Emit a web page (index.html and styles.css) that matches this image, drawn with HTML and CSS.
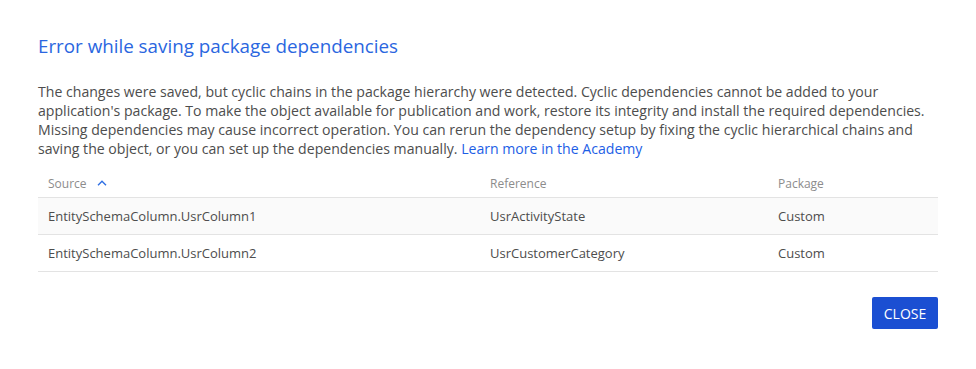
FILE: index.html
```html
<!DOCTYPE html>
<html lang="en">
<head>
    <meta charset="UTF-8">
    <meta name="viewport" content="width=device-width, initial-scale=1.0">
    <title>Error while saving package dependencies</title>
    <link rel="stylesheet" href="styles.css">
</head>
<body>
    <div class="dialog">
        <div class="dialog-title">Error while saving package dependencies</div>

        <div class="dialog-text">
            The changes were saved, but cyclic chains in the package hierarchy were detected. Cyclic dependencies cannot be added to your
            application's package. To make the object available for publication and work, restore its integrity and install the required dependencies.
            Missing dependencies may cause incorrect operation. You can rerun the dependency setup by fixing the cyclic hierarchical chains and
            saving the object, or you can set up the dependencies manually. <a href="#" class="link">Learn more in the Academy</a>
        </div>

        <div class="grid">
            <div class="grid-row grid-head">
                <div class="cell cell-source">
                    Source
                    <svg class="sort-icon" width="10" height="6" viewBox="0 0 10 6">
                        <path d="M1 5.2 L5 1.2 L9 5.2" fill="none" stroke="#2f6fe4" stroke-width="1.4"/>
                    </svg>
                </div>
                <div class="cell cell-ref">Reference</div>
                <div class="cell cell-pkg">Package</div>
            </div>
            <div class="grid-row grid-item odd">
                <div class="cell cell-source">EntitySchemaColumn.UsrColumn1</div>
                <div class="cell cell-ref">UsrActivityState</div>
                <div class="cell cell-pkg">Custom</div>
            </div>
            <div class="grid-row grid-item">
                <div class="cell cell-source">EntitySchemaColumn.UsrColumn2</div>
                <div class="cell cell-ref">UsrCustomerCategory</div>
                <div class="cell cell-pkg">Custom</div>
            </div>
        </div>

        <div class="actions">
            <button class="btn-close">CLOSE</button>
        </div>
    </div>
</body>
</html>
```

FILE: styles.css
```css
body {
    margin: 0;
    background: #ffffff;
    font-family: "Open Sans", "Segoe UI", sans-serif;
}

.dialog {
    padding: 33px 38px 20px 38px;
}

.dialog-title {
    font-size: 18.8px;
    font-weight: 400;
    color: #2a66e0;
    line-height: 26px;
    margin-bottom: 23px;
}

.dialog-text {
    font-size: 14.1px;
    line-height: 19px;
    color: #4d4d4d;
    margin-bottom: 12px;
}

.link {
    color: #1d5ee6;
    text-decoration: none;
}

.grid-row {
    display: grid;
    grid-template-columns: 442px 288px 1fr;
    border-bottom: 1px solid #e3e3e3;
}

.cell {
    padding-left: 10px;
}

.grid-head {
    font-size: 12px;
    color: #8c8c8c;
    height: 27px;
    align-items: center;
}

.sort-icon {
    margin-left: 7px;
    vertical-align: 2px;
}

.grid-item {
    height: 36px;
    align-items: center;
    font-size: 13px;
    color: #4d4d4d;
}

.grid-item.odd {
    background: #fafafa;
}

.actions {
    display: flex;
    justify-content: flex-end;
    margin-top: 25px;
}

.btn-close {
    background: #1b4fd2;
    color: #ffffff;
    border: none;
    border-radius: 2px;
    height: 32px;
    width: 66px;
    font-family: inherit;
    font-size: 14px;
    padding: 0;
    cursor: pointer;
}
```
